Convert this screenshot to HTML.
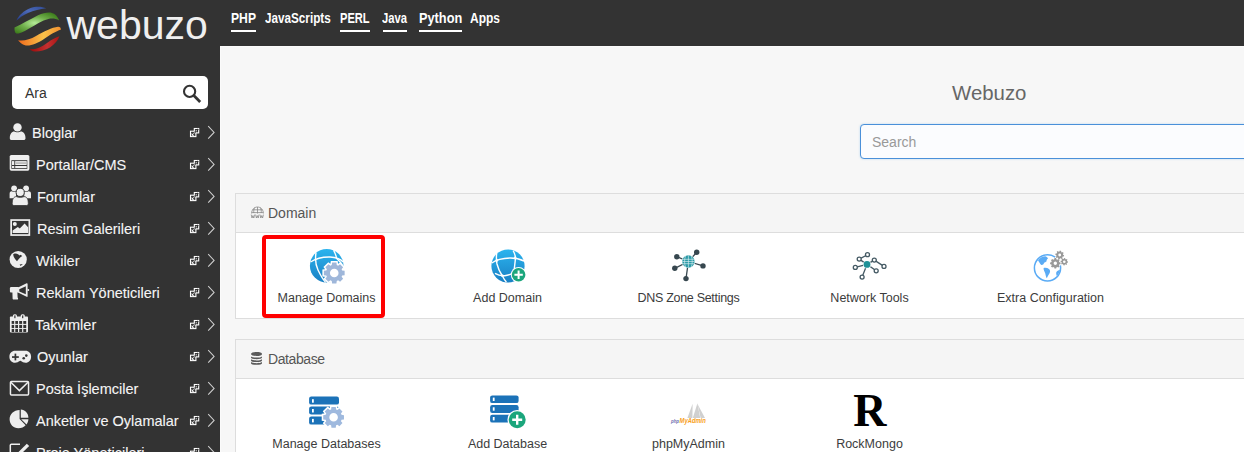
<!DOCTYPE html>
<html><head><meta charset="utf-8">
<style>
*{box-sizing:border-box;margin:0;padding:0}
html,body{width:1244px;height:452px;overflow:hidden;background:#333;font-family:"Liberation Sans",sans-serif}
.a{position:absolute;white-space:nowrap}
#logo-t{left:66.5px;top:2px;font-size:41px;line-height:46px;color:#efefef}
.nav{top:9px;font-size:15px;font-weight:bold;line-height:18px;color:#fff;transform-origin:0 0}
.ul{height:2px;background:#fff;top:30px}
#sb-search{left:12px;top:76px;width:196px;height:33px;background:#fff;border-radius:5px}
#sb-search span{left:13px;top:9px;font-size:14px;line-height:17px;color:#333}
.si{left:0;font-size:14.5px;line-height:18px;color:#f5f5f5;-webkit-text-stroke:0.1px #f5f5f5}
#content{left:220px;top:46px;width:1024px;height:406px;background:#f7f7f7;border-left:1px solid #fbfbfb;border-top:1px solid #fbfbfb}
.panel{left:235px;width:1020px;border:1px solid #ddd;background:#fff}
.ph{position:absolute;left:0;top:0;right:0;height:39px;background:#f5f5f5;border-bottom:1px solid #ddd}
.pt{font-size:14px;line-height:18px;color:#555}
.lbl{font-size:12.5px;line-height:16px;color:#3c3c3c;text-align:center;width:181px}
svg.ov{position:absolute;left:0;top:0}

</style></head><body>
<div class="a" id="logo-t">webuzo</div>
<div class="a nav" style="left:231px;transform:scaleX(0.81)">PHP</div>
<div class="a nav" style="left:265px;transform:scaleX(0.78)">JavaScripts</div>
<div class="a nav" style="left:340px;transform:scaleX(0.74)">PERL</div>
<div class="a nav" style="left:382px;transform:scaleX(0.75)">Java</div>
<div class="a nav" style="left:419px;transform:scaleX(0.85)">Python</div>
<div class="a nav" style="left:470px;transform:scaleX(0.8)">Apps</div>
<div class="a ul" style="left:231px;width:25px"></div>
<div class="a ul" style="left:340px;width:30px"></div>
<div class="a ul" style="left:383px;width:24px"></div>
<div class="a ul" style="left:419px;width:43px"></div>

<div class="a" id="sb-search"><span class="a">Ara</span></div>

<div class="a si" style="left:32px;top:124px">Bloglar</div>
<div class="a si" style="left:36px;top:156px">Portallar/CMS</div>
<div class="a si" style="left:37px;top:188px">Forumlar</div>
<div class="a si" style="left:37px;top:220px">Resim Galerileri</div>
<div class="a si" style="left:36px;top:252px">Wikiler</div>
<div class="a si" style="left:36px;top:284px">Reklam Yöneticileri</div>
<div class="a si" style="left:35px;top:316px">Takvimler</div>
<div class="a si" style="left:37px;top:348px">Oyunlar</div>
<div class="a si" style="left:36px;top:380px">Posta İşlemciler</div>
<div class="a si" style="left:36px;top:412px">Anketler ve Oylamalar</div>
<div class="a si" style="left:36px;top:444px">Proje Yöneticileri</div>

<div class="a" id="content"></div>
<div class="a" style="left:952px;top:81px;font-size:20.4px;line-height:24px;color:#666">Webuzo</div>
<div class="a" style="left:860px;top:124px;width:420px;height:35px;border:1.5px solid #4a90d9;border-radius:4px;background:#fbfcfe;box-shadow:0 0 2px rgba(102,175,233,.5)"></div>
<div class="a" style="left:872px;top:134px;font-size:14px;line-height:17px;color:#999">Search</div>

<div class="a panel" style="top:193px;height:126px"><div class="ph"></div></div>
<div class="a pt" style="left:268px;top:204px">Domain</div>
<div class="a lbl" style="left:236px;top:290px">Manage Domains</div>
<div class="a lbl" style="left:417px;top:290px">Add Domain</div>
<div class="a lbl" style="left:598px;top:290px;letter-spacing:-0.3px">DNS Zone Settings</div>
<div class="a lbl" style="left:779px;top:290px">Network Tools</div>
<div class="a lbl" style="left:960px;top:290px">Extra Configuration</div>
<div class="a" style="left:262px;top:235px;width:123px;height:83px;border:4px solid #f00;border-radius:4px"></div>

<div class="a panel" style="top:339px;height:200px"><div class="ph"></div></div>
<div class="a pt" style="left:268px;top:350px;letter-spacing:-0.4px">Database</div>
<div class="a lbl" style="left:236px;top:436px">Manage Databases</div>
<div class="a lbl" style="left:417px;top:436px">Add Database</div>
<div class="a lbl" style="left:598px;top:436px">phpMyAdmin</div>
<div class="a lbl" style="left:779px;top:436px">RockMongo</div>

<svg class="ov" width="1244" height="452" viewBox="0 0 1244 452">
<defs>
<linearGradient id="gBlue" x1="0" y1="1" x2="1" y2="0"><stop offset="0" stop-color="#233a86"/><stop offset="0.55" stop-color="#4d6ab8"/><stop offset="1" stop-color="#304c98"/></linearGradient>
<radialGradient id="gGreen" cx="0.45" cy="0.5" r="0.6"><stop offset="0" stop-color="#b4ec98"/><stop offset="0.5" stop-color="#6fae4a"/><stop offset="1" stop-color="#3f7f1e"/></radialGradient>
<linearGradient id="gOrange" x1="0" y1="0" x2="1" y2="0"><stop offset="0" stop-color="#f06a1c"/><stop offset="0.6" stop-color="#f8c24a"/><stop offset="1" stop-color="#f29030"/></linearGradient>
<linearGradient id="gRed" x1="0" y1="0" x2="1" y2="0"><stop offset="0" stop-color="#9a0a0a"/><stop offset="0.6" stop-color="#c43030"/><stop offset="1" stop-color="#a81414"/></linearGradient>
<linearGradient id="gGlobe" x1="0" y1="0" x2="0" y2="1"><stop offset="0" stop-color="#2bb4ee"/><stop offset="1" stop-color="#1a80c4"/></linearGradient>
<path id="gear1" d="M7.91,-2.50 L10.38,-2.15 L10.38,2.15 L7.91,2.50 L7.37,3.83 L8.86,5.82 L5.82,8.86 L3.83,7.37 L2.50,7.91 L2.15,10.38 L-2.15,10.38 L-2.50,7.91 L-3.83,7.37 L-5.82,8.86 L-8.86,5.82 L-7.37,3.83 L-7.91,2.50 L-10.38,2.15 L-10.38,-2.15 L-7.91,-2.50 L-7.37,-3.83 L-8.86,-5.82 L-5.82,-8.86 L-3.83,-7.37 L-2.50,-7.91 L-2.15,-10.38 L2.15,-10.38 L2.50,-7.91 L3.83,-7.37 L5.82,-8.86 L8.86,-5.82 L7.37,-3.83Z M4.30,0.00 A4.3,4.3 0 1 0 -4.30,0.00 A4.3,4.3 0 1 0 4.30,0.00Z" fill-rule="evenodd"/>
<path id="gear1o" d="M7.91,-2.50 L10.38,-2.15 L10.38,2.15 L7.91,2.50 L7.37,3.83 L8.86,5.82 L5.82,8.86 L3.83,7.37 L2.50,7.91 L2.15,10.38 L-2.15,10.38 L-2.50,7.91 L-3.83,7.37 L-5.82,8.86 L-8.86,5.82 L-7.37,3.83 L-7.91,2.50 L-10.38,2.15 L-10.38,-2.15 L-7.91,-2.50 L-7.37,-3.83 L-8.86,-5.82 L-5.82,-8.86 L-3.83,-7.37 L-2.50,-7.91 L-2.15,-10.38 L2.15,-10.38 L2.50,-7.91 L3.83,-7.37 L5.82,-8.86 L8.86,-5.82 L7.37,-3.83Z"/>
<path id="gear2" d="M4.08,-1.01 L5.23,-0.87 L5.23,0.87 L4.08,1.01 L3.60,2.17 L4.31,3.08 L3.08,4.31 L2.17,3.60 L1.01,4.08 L0.87,5.23 L-0.87,5.23 L-1.01,4.08 L-2.17,3.60 L-3.08,4.31 L-4.31,3.08 L-3.60,2.17 L-4.08,1.01 L-5.23,0.87 L-5.23,-0.87 L-4.08,-1.01 L-3.60,-2.17 L-4.31,-3.08 L-3.08,-4.31 L-2.17,-3.60 L-1.01,-4.08 L-0.87,-5.23 L0.87,-5.23 L1.01,-4.08 L2.17,-3.60 L3.08,-4.31 L4.31,-3.08 L3.60,-2.17Z M1.70,0.00 A1.7,1.7 0 1 0 -1.70,0.00 A1.7,1.7 0 1 0 1.70,0.00Z" fill-rule="evenodd"/>
<path id="gear3" d="M3.40,-0.15 L4.40,0.15 L4.11,1.57 L3.07,1.46 L2.51,2.30 L3.00,3.22 L1.80,4.02 L1.14,3.20 L0.15,3.40 L-0.15,4.40 L-1.57,4.11 L-1.46,3.07 L-2.30,2.51 L-3.22,3.00 L-4.02,1.80 L-3.20,1.14 L-3.40,0.15 L-4.40,-0.15 L-4.11,-1.57 L-3.07,-1.46 L-2.51,-2.30 L-3.00,-3.22 L-1.80,-4.02 L-1.14,-3.20 L-0.15,-3.40 L0.15,-4.40 L1.57,-4.11 L1.46,-3.07 L2.30,-2.51 L3.22,-3.00 L4.02,-1.80 L3.20,-1.14Z M1.40,0.00 A1.4,1.4 0 1 0 -1.40,0.00 A1.4,1.4 0 1 0 1.40,0.00Z" fill-rule="evenodd"/>
<path id="gear4" d="M2.87,-0.41 L3.69,-0.24 L3.57,0.97 L2.73,0.98 L2.32,1.74 L2.78,2.44 L1.84,3.21 L1.24,2.62 L0.41,2.87 L0.24,3.69 L-0.97,3.57 L-0.98,2.73 L-1.74,2.32 L-2.44,2.78 L-3.21,1.84 L-2.62,1.24 L-2.87,0.41 L-3.69,0.24 L-3.57,-0.97 L-2.73,-0.98 L-2.32,-1.74 L-2.78,-2.44 L-1.84,-3.21 L-1.24,-2.62 L-0.41,-2.87 L-0.24,-3.69 L0.97,-3.57 L0.98,-2.73 L1.74,-2.32 L2.44,-2.78 L3.21,-1.84 L2.62,-1.24Z M1.30,0.00 A1.3,1.3 0 1 0 -1.30,0.00 A1.3,1.3 0 1 0 1.30,0.00Z" fill-rule="evenodd"/>
<g id="ext">
  <rect x="190.5" y="131.2" width="5.4" height="5.4" fill="none" stroke="#fff" stroke-width="1.1"/>
  <rect x="194.3" y="128.5" width="4.4" height="4.4" fill="none" stroke="#fff" stroke-width="1.1"/>
  <path d="M191.6,135.6 L198.2,129" stroke="#333" stroke-width="1.5"/>
  <path d="M193.2,134 L197.2,130" stroke="#fff" stroke-width="1" stroke-dasharray="1 1"/>
  <path d="M191.6,135.8 L191.6,132.9 L194.5,135.8 Z" fill="#fff"/>
</g>
<path id="chev" d="M208.2,126.2 L214.1,132.4 L208.2,138.6" fill="none" stroke="#cfcfcf" stroke-width="1.05"/>
</defs>

<!-- logo globe -->
<path d="M16.3,20.7 C18.5,15.5 24,10.5 30,8.2 C36,6 42,6.5 46.2,8.3 C40,9.3 34,10.6 28,13 C23,15 19.5,18 16.3,20.7 Z" fill="url(#gBlue)"/>
<path d="M14.5,27.5 C22,24 30,19.5 38,15.3 C45,12 51,11.5 54.5,14 C57,16 58.5,18.5 59.2,20.4 C56,18.5 52,18 48.4,18.9 C42,20.5 36,24.4 30,28 C25,31 20,34 16.5,33.5 C14.8,33 14.3,30 14.5,27.5 Z" fill="url(#gGreen)"/>
<path d="M18.2,40.2 C24,41 30,39.5 36,36 C44,31.5 52,27.5 58,26.8 C60,26.7 61,28 60.8,29.8 C56,31 50,35 44,39 C38,43 32,45.5 27.5,45.5 C23,45.5 20,42.5 18.2,40.2 Z" fill="url(#gOrange)"/>
<path d="M29.3,49.2 C35,49.8 41,47.5 47,43 C52,39.5 56,37 59.5,36.2 C58,40 55,44 50,47.5 C45,50.5 40,51.6 35,51.5 C32,51.3 30.5,50 29.3,49.2 Z" fill="url(#gRed)"/>

<!-- search magnifier -->
<circle cx="189.6" cy="91.4" r="5.6" fill="none" stroke="#333" stroke-width="2.1"/>
<path d="M193.8,95.6 L200.2,102" stroke="#333" stroke-width="2.8"/>

<!-- sidebar icons -->
<g fill="#eee">
  <!-- user -->
  <circle cx="17.5" cy="127.4" r="4.2"/>
  <path d="M9.8,138.2 C9.8,134 11.8,131.6 14.2,131.6 C15.6,132.6 19.4,132.6 20.8,131.6 C23.4,131.6 25.5,134 25.5,138.2 C25.5,139.4 24.8,140 23.6,140 L11.7,140 C10.5,140 9.8,139.4 9.8,138.2 Z"/>
  <!-- list-alt -->
  <rect x="9.7" y="155" width="19.7" height="15.7" rx="1.6"/>
  <!-- users -->
  <circle cx="14.1" cy="188.3" r="2.9"/>
  <circle cx="26.1" cy="188.3" r="2.9"/>
  <path d="M9.6,198.2 L9.6,193.8 C9.6,191.8 10.8,191.2 12.2,191.4 C13,192 15,192 16,191.5 L16,198.2 Z"/>
  <path d="M24.2,198.2 L24.2,191.5 C25.2,192 27.2,192 28,191.4 C29.6,191.2 31,191.8 31,193.8 L31,198.2 Z"/>
  <circle cx="20.2" cy="192.4" r="4.1" stroke="#333" stroke-width="1"/>
  <path d="M12.2,203.6 C12.2,199 13.8,196.6 16.4,196.6 C17.8,197.6 22.6,197.6 24,196.6 C26.8,196.6 28.3,199 28.3,203.6 C28.3,204.8 27.6,205.5 26.4,205.5 L14.1,205.5 C12.9,205.5 12.2,204.8 12.2,203.6 Z" stroke="#333" stroke-width="0.8"/>
  <!-- picture -->
  <circle cx="14.8" cy="224.1" r="2"/>
  <path d="M12.6,232.9 L12.6,230.4 L17.8,226.9 L19.8,228.6 L24.6,223.6 L28.1,227.2 L28.1,232.9 Z"/>
  <!-- globe -->
  <circle cx="18.2" cy="259.5" r="8.6"/>
  <!-- megaphone -->
  <path d="M11.2,287 L18.6,287 L18.6,292.6 L11.2,292.6 C10.4,292.6 9.9,292 9.9,291.2 L9.9,288.4 C9.9,287.6 10.4,287 11.2,287 Z"/>
  <path d="M12.4,292 L17.4,292 L17.6,297.6 C18.2,298.2 18.4,299.6 17.6,299.6 L13.6,299.6 C13,299.6 12.6,299.2 12.6,298.6 Z"/>
  <path d="M18,287.4 L26.6,283.2 C27.3,283 27.6,283.4 27.6,284 L27.6,296.2 C27.6,296.8 27.2,297.1 26.6,296.8 L18,292.5 Z"/>
  <rect x="27.4" y="289" width="1.8" height="2" rx="0.8"/>
  <!-- calendar -->
  <rect x="9.9" y="316.6" width="18.1" height="15.8" rx="0.8"/>
  <rect x="12.9" y="314.2" width="4.1" height="4.6" rx="1.6"/>
  <rect x="20.7" y="314.2" width="4.1" height="4.6" rx="1.6"/>
  <!-- gamepad -->
  <path d="M15.2,350.8 L25.4,350.8 C28.8,350.8 31.1,353.3 31.1,356.7 C31.1,360.2 28.8,362.7 25.6,362.7 C23.6,362.7 22.2,361.5 20.8,360.9 C20.2,360.7 20.4,360.7 19.8,360.9 C18.4,361.5 17,362.7 15,362.7 C11.8,362.7 9.4,360.2 9.4,356.7 C9.4,353.3 11.8,350.8 15.2,350.8 Z"/>
  <!-- pie -->
  <path d="M19.6,410 L19.6,418.9 L25.6,425.2 C24,427 21.4,428.2 18.4,428.2 C13.4,428.2 9.6,424.2 9.6,419.2 C9.6,414.2 13.6,410.2 19.6,410 Z"/>
  <path d="M20.8,409.6 C25,409.8 28.3,413.3 28.4,417.8 L20.8,417.8 Z"/>
  <path d="M21.2,419.3 L28.4,419.3 C28.3,421.4 27.6,423 26.5,424.5 Z"/>
</g>
<g fill="#333">
  <!-- list-alt inner -->
  <rect x="11.4" y="160.2" width="15.9" height="8.7"/>
  <!-- globe ocean -->
  <path d="M13.2,254.6 C13.8,253.2 16.6,253.3 18.4,254.4 L19.6,255.6 L20.6,254.8 L22.2,256 L20.2,257.4 L18.6,259.2 L17,261.2 C15.2,259.4 13.2,257 13.2,254.6 Z"/>
  <path d="M19.6,264.4 L22.9,263.9 L20.6,266 Z"/>
  <!-- megaphone inner -->
  <path d="M19.3,289.2 L25.8,286.2 L25.8,294.2 L19.3,291.6 Z"/>
  <!-- calendar cells -->
  <rect x="11.65" y="321" width="2.5" height="2.9"/><rect x="15.3" y="321" width="2.7" height="2.9"/><rect x="19.2" y="321" width="2.9" height="2.9"/><rect x="23.3" y="321" width="2.9" height="2.9"/>
  <rect x="11.65" y="324.9" width="2.5" height="3.2"/><rect x="15.3" y="324.9" width="2.7" height="3.2"/><rect x="19.2" y="324.9" width="2.9" height="3.2"/><rect x="23.3" y="324.9" width="2.9" height="3.2"/>
  <rect x="11.65" y="329" width="2.5" height="3"/><rect x="15.3" y="329" width="2.7" height="3"/><rect x="19.2" y="329" width="2.9" height="3"/><rect x="23.3" y="329" width="2.9" height="3"/>
  <rect x="14.3" y="315.4" width="1.2" height="2.8"/><rect x="22.1" y="315.4" width="1.2" height="2.8"/>
  <!-- gamepad -->
  <rect x="12" y="356.2" width="6.8" height="1.7"/><rect x="14.55" y="353.6" width="1.7" height="6.8"/>
  <circle cx="23.7" cy="358.2" r="1.3"/><circle cx="26.3" cy="355.6" r="1.3"/>
</g>
<g fill="#eee">
  <rect x="12" y="161.1" width="14.7" height="3.9"/>
  <rect x="12" y="166" width="14.7" height="2.1"/>
</g>
<g fill="#333"><rect x="14.3" y="161" width="0.9" height="7.2"/></g>
<rect x="15.6" y="162.2" width="10.4" height="1.8" fill="#bbb"/>
<g fill="none" stroke="#eee">
  <!-- picture frame -->
  <rect x="11.15" y="220.05" width="18.2" height="15" stroke-width="1.7"/>
  <!-- envelope -->
  <rect x="10.45" y="381.45" width="18.1" height="13.6" rx="1" stroke-width="1.5"/>
  <path d="M10.8,382.2 L19.4,390.6 L28,382.2" stroke-width="1.5"/>
  <!-- edit -->
  <path d="M20,444.2 L11.4,444.2 C10.8,444.2 10.3,444.7 10.3,445.3 L10.3,452" stroke-width="1.5"/>
</g>
<path d="M18.5,452 L26.8,443.8 L29.2,446 L21,454" fill="#eee"/>

<!-- external links & chevrons -->
<use href="#ext"/><use href="#chev"/>
<use href="#ext" y="32"/><use href="#chev" y="32"/>
<use href="#ext" y="64"/><use href="#chev" y="64"/>
<use href="#ext" y="96"/><use href="#chev" y="96"/>
<use href="#ext" y="128"/><use href="#chev" y="128"/>
<use href="#ext" y="160"/><use href="#chev" y="160"/>
<use href="#ext" y="192"/><use href="#chev" y="192"/>
<use href="#ext" y="224"/><use href="#chev" y="224"/>
<use href="#ext" y="256"/><use href="#chev" y="256"/>
<use href="#ext" y="288"/><use href="#chev" y="288"/>
<use href="#ext" y="320"/><use href="#chev" y="320"/>

<!-- panel heading icons -->
<g fill="none" stroke="#888" stroke-width="0.8">
  <path d="M251.6,213.5 C251.6,209.6 254.4,207 257.5,207 C260.6,207 263.4,209.6 263.4,213.5"/>
  <path d="M257.5,207 L257.5,213.5 M251.8,212.6 L263.2,212.6 M252.6,209.8 L262.4,209.8 M254.6,207.6 C253.8,209 253.6,211 253.8,213 M260.4,207.6 C261.2,209 261.4,211 261.2,213"/>
  <path d="M251.2,214.6 L252,218 L252.9,215.6 L253.8,218 L254.6,214.6 M255.6,214.6 L256.4,218 L257.3,215.6 L258.2,218 L259,214.6 M260,214.6 L260.8,218 L261.7,215.6 L262.6,218 L263.4,214.6"/>
</g>
<g fill="#5a5a5a">
  <path d="M251,354 C251,352.6 253.4,352 256.5,352 C259.6,352 262,352.6 262,354 C262,355.4 259.6,356 256.5,356 C253.4,356 251,355.4 251,354 Z"/>
  <path transform="translate(0,0)" d="M251,356.4 C252,357.2 254,357.6 256.5,357.6 C259,357.6 261,357.2 262,356.4 L262,357.6 C262,358.6 259.6,359.2 256.5,359.2 C253.4,359.2 251,358.6 251,357.6 Z"/><path transform="translate(0,2.9)" d="M251,356.4 C252,357.2 254,357.6 256.5,357.6 C259,357.6 261,357.2 262,356.4 L262,357.6 C262,358.6 259.6,359.2 256.5,359.2 C253.4,359.2 251,358.6 251,357.6 Z"/><path transform="translate(0,5.6)" d="M251,356.4 C252,357.2 254,357.6 256.5,357.6 C259,357.6 261,357.2 262,356.4 L262,357.6 C262,358.6 259.6,359.2 256.5,359.2 C253.4,359.2 251,358.6 251,357.6 Z"/>
</g>

<!-- Manage Domains -->
<circle cx="326.7" cy="265.7" r="16.8" fill="url(#gGlobe)"/>
<g fill="none" stroke="#fff" stroke-width="1.4">
  <path d="M310.5,262 C316,258.4 322,256.8 330,257 C336,257.2 340,258.6 343.2,262"/>
  <path d="M316,252.6 C315.2,258 315,264 318,270 C320.4,275 322.6,279 325.6,282.4"/>
  <path d="M333.6,250.2 C335,253 336.4,256.5 336.5,258.2 C338.2,260 340.4,262 342.4,264.8"/>
</g>
<use href="#gear1o" transform="translate(334.25,273)" fill="#fff" stroke="#fff" stroke-width="3"/>
<use href="#gear1" transform="translate(334.25,273)" fill="#9fb7da"/>

<!-- Add Domain -->
<circle cx="508" cy="266" r="16.6" fill="url(#gGlobe)"/>
<g fill="none" stroke="#fff" stroke-width="1.4">
  <path d="M491.8,263 C496,260 502,258.2 510,258 C516,257.9 520,259 524,261"/>
  <path d="M495,273.4 C498.5,275.5 502,276.2 506,275.5 C509,275 512,274 514,272.6"/>
  <path d="M496.7,253.2 C496.2,257 496.2,260 497,264 C498.2,269 500.4,273 502.4,276 C503.6,278.4 505,280.6 506.4,282"/>
  <path d="M513.2,250.8 C514.6,253.5 515.6,255.8 515.4,258 C515.2,263 514.4,266 514,272"/>
</g>
<g fill="#fff"><circle cx="496.8" cy="260.4" r="1.3"/><circle cx="515.2" cy="257.8" r="1.3"/><circle cx="502.4" cy="275.8" r="1.3"/></g>
<circle cx="518.6" cy="274.7" r="7.8" fill="#fff"/>
<circle cx="518.6" cy="274.7" r="6.8" fill="#1ba67c"/>
<path d="M514.4,274.7 L522.8,274.7 M518.6,270.5 L518.6,278.9" stroke="#fff" stroke-width="2"/>

<!-- DNS Zone Settings -->
<g stroke="#37474f" stroke-width="1.3">
  <path d="M688.4,261.5 L676.8,256.7 M688.4,261.5 L696.7,252.3 M688.4,261.5 L674.8,268.3 M688.4,261.5 L703,265.9 M688.4,261.5 L686,278.6"/>
</g>
<g fill="#37474f">
  <circle cx="676.8" cy="256.7" r="2.7"/><circle cx="696.7" cy="252.3" r="2.7"/><circle cx="674.8" cy="268.3" r="2.7"/><circle cx="703" cy="265.9" r="2.7"/><circle cx="686" cy="278.6" r="2.7"/>
</g>
<circle cx="688.4" cy="261.5" r="6.6" fill="#fff"/>
<circle cx="688.4" cy="261.5" r="6.2" fill="#2b9aa6"/>
<g fill="none" stroke="#e6f4f6" stroke-width="0.6">
  <path d="M682.4,259.3 L694.4,259.3 M682.2,261.5 L694.6,261.5 M682.4,263.7 L694.4,263.7"/>
  <path d="M688.4,255.3 L688.4,267.7 M685.6,255.9 C684.2,259 684.2,264 685.6,267.1 M691.2,255.9 C692.6,259 692.6,264 691.2,267.1"/>
</g>

<!-- Network Tools -->
<g stroke="#455a64" stroke-width="1.3" fill="none">
  <path d="M867,264.4 L859.2,259.1 M859.2,259.1 L867.5,254.7 M867,264.4 L874.3,260.1 M874.3,260.1 L884,266.4 M867,264.4 L855.3,267.4 M867,264.4 L876.2,270.8 M867,264.4 L862.1,277.1"/>
</g>
<g fill="#fff" stroke="#455a64" stroke-width="1.3">
  <circle cx="859.2" cy="259.1" r="2"/><circle cx="867.5" cy="254.7" r="2"/><circle cx="874.3" cy="260.1" r="2"/><circle cx="884" cy="266.4" r="2"/><circle cx="855.3" cy="267.4" r="2"/><circle cx="876.2" cy="270.8" r="2"/><circle cx="862.1" cy="277.1" r="2"/>
</g>
<circle cx="867" cy="264.4" r="4" fill="#fff"/>
<circle cx="867" cy="264.4" r="3.4" fill="#1f9197"/>

<!-- Extra Configuration -->
<path d="M1055.2,257.2 C1053,255.6 1050.4,254.8 1047.5,254.8 C1040.3,254.8 1034.4,260.7 1034.4,267.9 C1034.4,275.1 1040.3,281 1047.5,281 C1054.7,281 1060.6,275.1 1060.6,267.9 C1060.6,267 1060.5,266.2 1060.4,265.4" fill="none" stroke="#5aabf5" stroke-width="1.5"/>
<g fill="#5aabf5">
  <path d="M1038,260.5 C1039.5,258 1042,256.6 1045,256.2 C1046.5,256.6 1047.8,257.4 1048,258.6 C1047,259.5 1046.4,260 1046.6,261.2 C1045.8,262.2 1044.6,262 1044,263 C1043.8,264.2 1042.6,265.2 1041.4,265 C1040,264.2 1039.8,262.6 1038,260.5 Z"/>
  <path d="M1043.6,268 C1045.6,267.6 1047.6,268 1049,269 C1050.4,270.2 1050.4,272 1049.4,273.6 C1048.4,275 1047.6,276.6 1046.8,278.2 C1046,277 1045.6,275 1045.2,273.2 C1044.6,271.4 1043.4,270 1043.6,268 Z"/>
  <path d="M1056.4,272 C1057.6,270.6 1059,270 1060,269.8 C1059.6,272.4 1058.4,274.6 1056.8,276 C1056.2,274.8 1056,273.2 1056.4,272 Z"/>
</g>
<g fill="#999">
  <use href="#gear2" transform="translate(1055.3,263.3)"/>
  <use href="#gear3" transform="translate(1059.7,255)"/>
  <use href="#gear4" transform="translate(1064.3,261.7)"/>
</g>

<!-- Manage Databases -->
<g fill="#1b72b8">
  <rect x="309.1" y="396.6" width="29.9" height="8" rx="2.2"/>
  <rect x="309.1" y="406.6" width="29.9" height="7.8" rx="2.2"/>
  <rect x="309.1" y="416.5" width="29.9" height="8.1" rx="2.2"/>
</g>
<g fill="#fff">
  <rect x="312" y="399.2" width="1.8" height="3.5"/><rect x="312" y="409" width="1.8" height="3.5"/><rect x="312" y="418.9" width="1.8" height="3.5"/>
</g>
<use href="#gear1o" transform="translate(333.6,417.3)" fill="#fff" stroke="#fff" stroke-width="3"/>
<use href="#gear1" transform="translate(333.6,417.3)" fill="#9fb9de"/>

<!-- Add Database -->
<g fill="#1b72b8">
  <rect x="490.1" y="395.4" width="28.5" height="7.7" rx="2.2"/>
  <rect x="490.1" y="405.1" width="28.5" height="7.8" rx="2.2"/>
  <rect x="490.1" y="414.8" width="28.5" height="7.8" rx="2.2"/>
</g>
<g fill="#fff">
  <rect x="492.8" y="397.6" width="1.8" height="3.4"/><rect x="492.8" y="407.3" width="1.8" height="3.4"/><rect x="492.8" y="417" width="1.8" height="3.4"/>
</g>
<circle cx="517.2" cy="419.7" r="9.8" fill="#fff"/>
<circle cx="517.2" cy="419.7" r="8.5" fill="#1ba67c"/>
<path d="M512.2,419.7 L522.2,419.7 M517.2,414.7 L517.2,424.7" stroke="#fff" stroke-width="2.4"/>

<!-- phpMyAdmin -->
<g fill="#d0d0d0">
  <path d="M687.4,418 L692.6,403.8 L692.4,418 Z"/>
  <path d="M692.8,418 L697.4,403.2 L700.2,418 Z"/>
  <path d="M697.6,404.2 L705,418 L700.6,418 Z"/>
</g>
<text x="671" y="423" font-family="Liberation Sans" font-style="italic" font-weight="bold" font-size="6" fill="#6c6cb0" textLength="8" lengthAdjust="spacingAndGlyphs">php</text>
<text x="679.6" y="423" font-family="Liberation Sans" font-style="italic" font-weight="bold" font-size="7.4" fill="#f8a020" textLength="26.2" lengthAdjust="spacingAndGlyphs">MyAdmin</text>

<!-- RockMongo -->
<text x="853.2" y="426" font-family="Liberation Serif" font-weight="bold" font-size="46" fill="#000">R</text>
</svg>

</body></html>
